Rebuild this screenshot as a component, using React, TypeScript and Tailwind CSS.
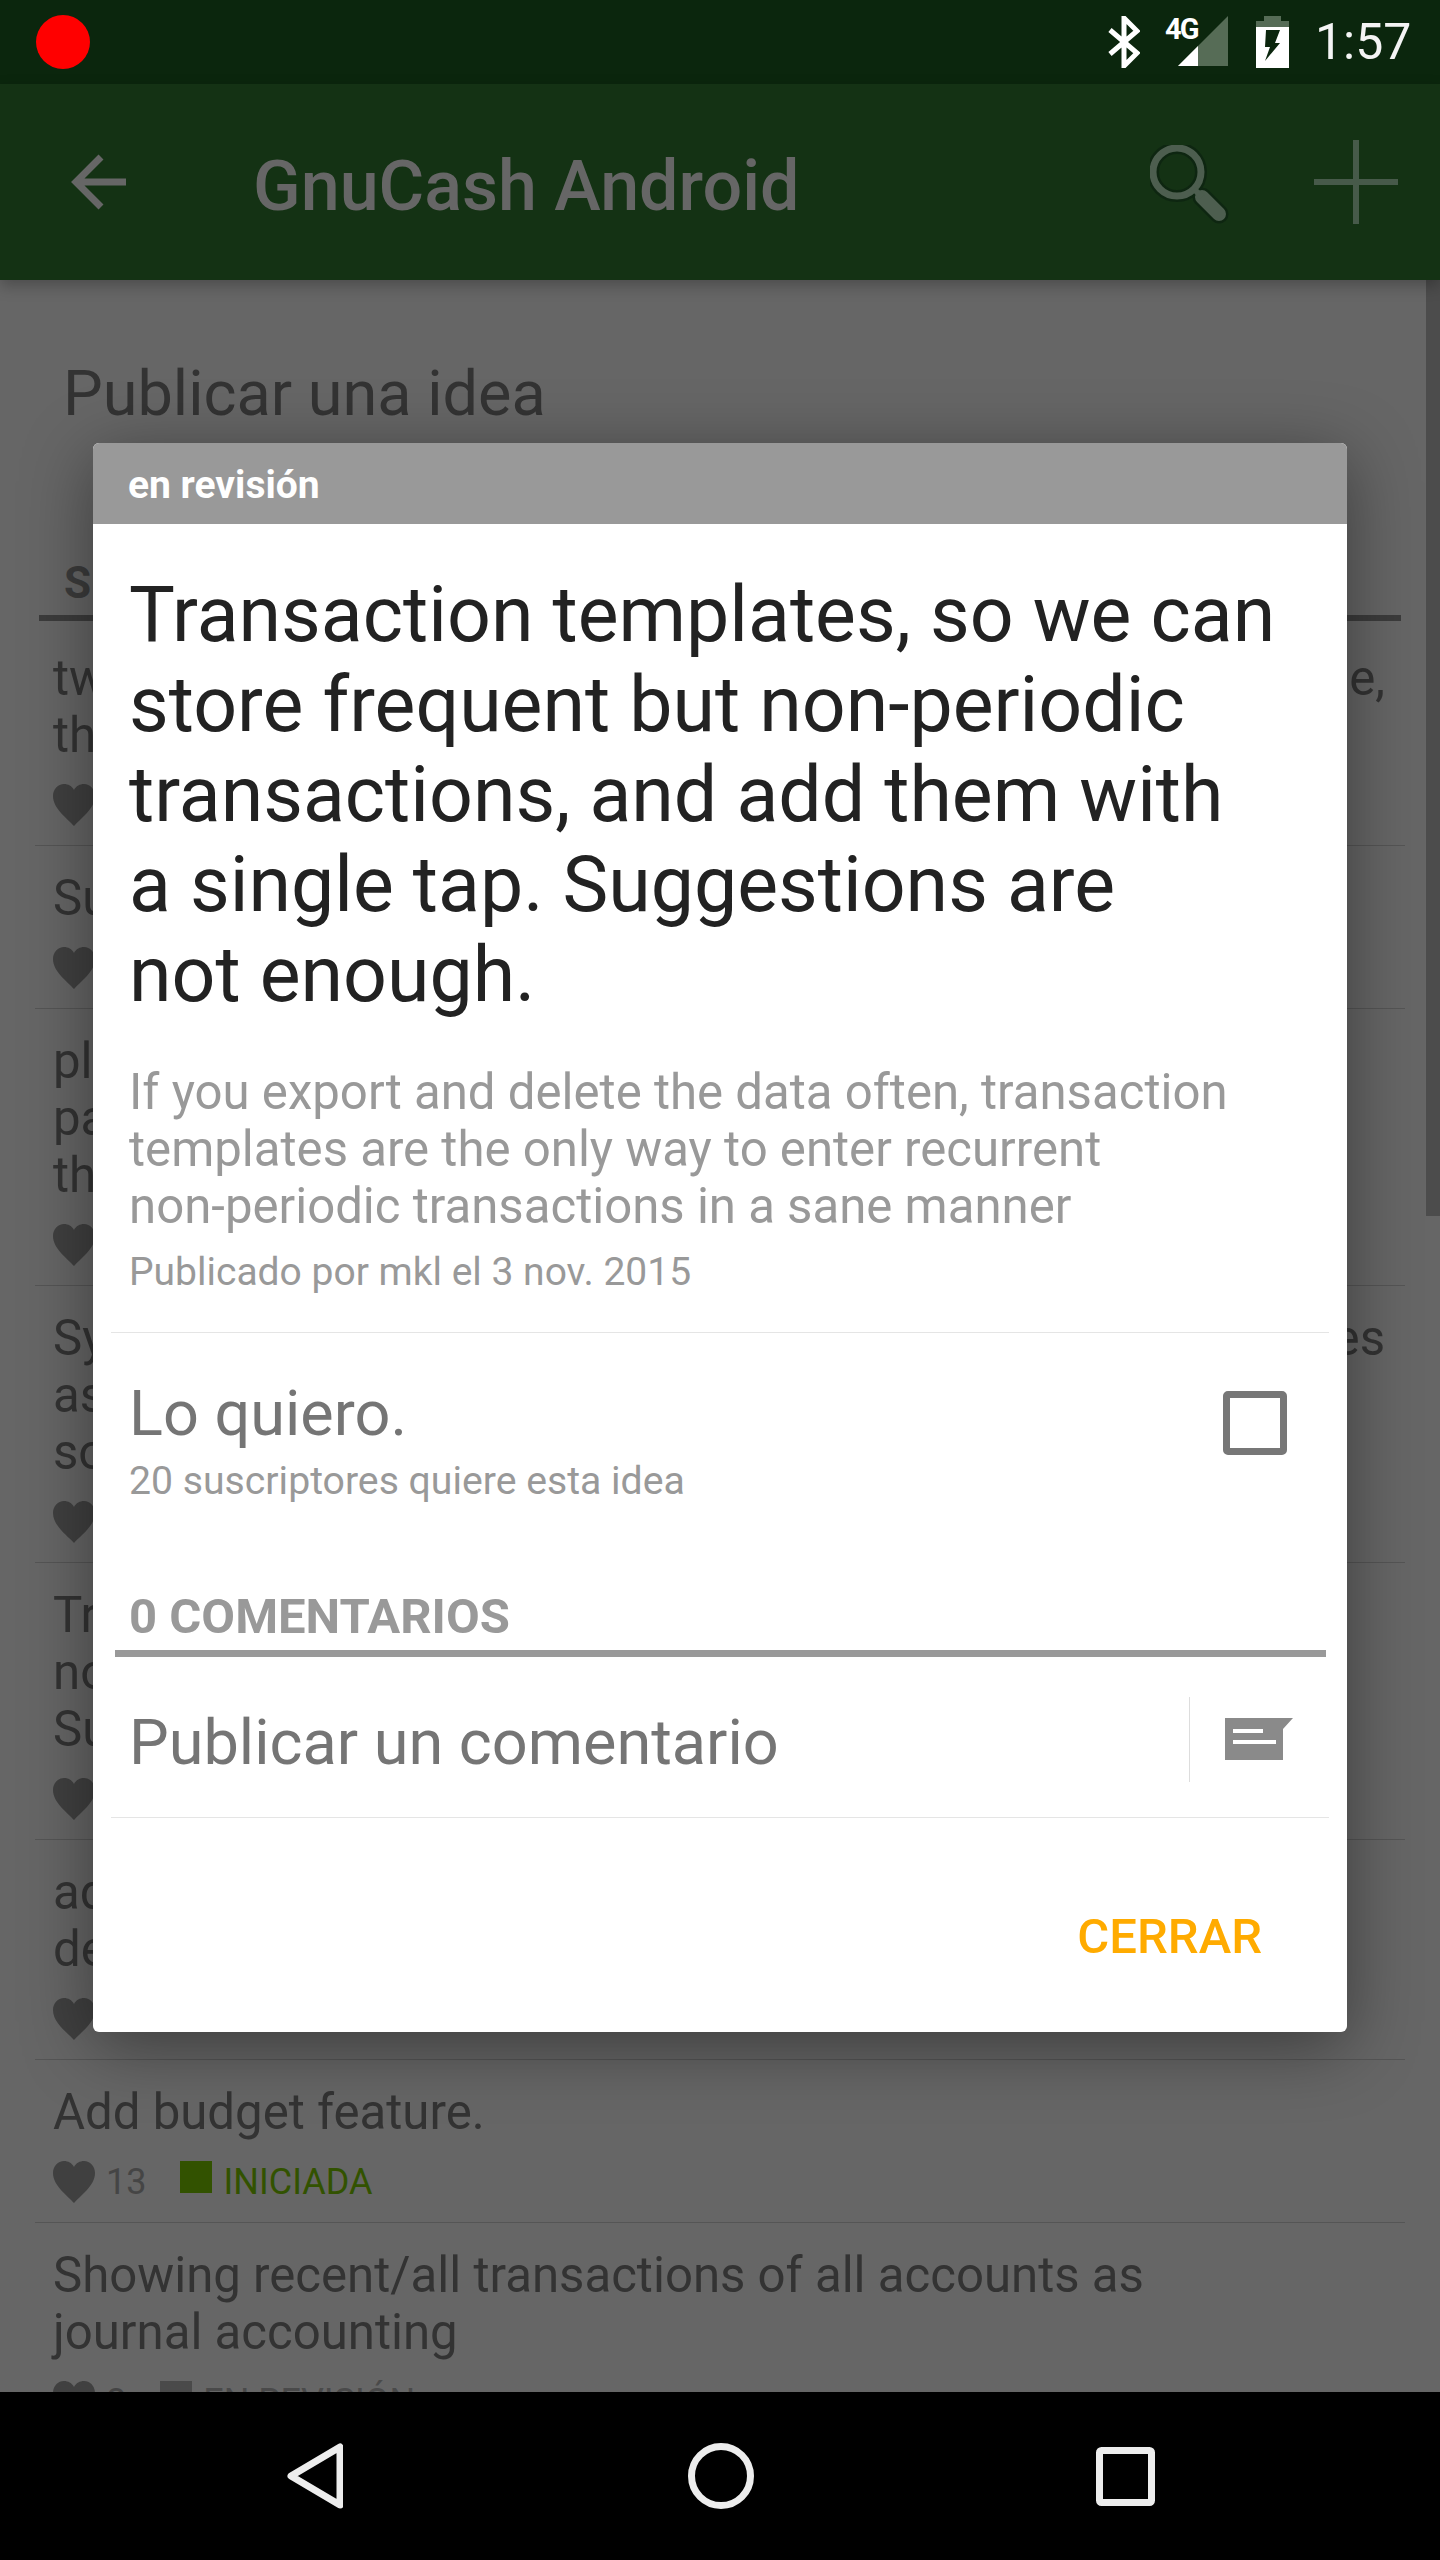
import React from "react";

function Heart() {
  return (
    <svg width="42" height="42" viewBox="0 0 42 42" className="block shrink-0">
      <path d="M21 42C15 35 0 25 0 12C0 5 5 0 11 0C15 0 19 2 21 6C23 2 27 0 31 0C37 0 42 5 42 12C42 25 27 35 21 42Z" fill="#404040" />
    </svg>
  );
}

function Row({ lines, count, status, color, end }: { lines: string[]; count: string; status: string; color: string; end?: string }) {
  return (
    <div className="mx-[35px] border-b border-[#555555] pt-[24px] pb-[19px]">
      {lines.map((l, i) => (
        <div key={i} className="flex justify-between whitespace-nowrap pl-[18px] pr-[20px] text-[49.15px] leading-[57px] text-[#333333]">
          <span>{l}</span>
          {i === 0 && end ? <span>{end}</span> : null}
        </div>
      ))}
      <div className="mt-[14px] flex h-[48px] items-start pl-[18px] pt-[6px]">
        <Heart />
        <span className="ml-[11px] text-[36px] leading-[42px] text-[#454545]">{count}</span>
        <span className="ml-[34px] h-[32px] w-[32px] shrink-0" style={{ backgroundColor: color }} />
        <span className="ml-[11px] text-[36px] leading-[42px]" style={{ color }}>{status}</span>
      </div>
    </div>
  );
}

export default function App() {
  return (
    <div className="relative flex h-[2560px] w-[1440px] flex-col overflow-hidden bg-[#666666] font-['Roboto',sans-serif]">
      {/* status bar */}
      <div className="flex h-[84px] shrink-0 items-center bg-[#0b260d] pl-[36px]">
        <div className="h-[54px] w-[54px] rounded-full bg-[#ff0000]" />
        <svg width="32" height="52" viewBox="0 0 32 52" className="ml-[1018px]">
          <path d="M2 14L29 37L16 50V2L29 15L2 38" fill="none" stroke="#ffffff" strokeWidth="5" />
        </svg>
        <div className="relative ml-[25px] h-[52px] w-[63px]">
          <span className="absolute left-0 top-[-3px] text-[29px] font-bold leading-[32px] tracking-[-2px] text-white">4G</span>
          <svg width="52" height="52" viewBox="0 0 52 52" className="absolute left-[11px] top-0">
            <path d="M2 50L52 0V50Z" fill="#566c56" />
            <path d="M2 50L22 30V50Z" fill="#ffffff" />
          </svg>
        </div>
        <svg width="34" height="52" viewBox="0 0 34 52" className="ml-[28px]">
          <path d="M8 0H25V5H33V11H0V5H8Z" fill="#566c56" />
          <path d="M0 11H33V52H0Z" fill="#ffffff" />
          <path d="M10 14H24L19 27H24L9 45L14 31H9Z" fill="#0b260d" />
        </svg>
        <span className="ml-[25px] text-[50px] leading-[56px] text-[#f4f4f4]">1:57</span>
      </div>

      {/* app bar */}
      <div className="z-10 flex h-[196px] shrink-0 items-center bg-[#143214] shadow-[0_6px_14px_rgba(0,0,0,0.25)]">
        <svg width="56" height="56" viewBox="0 0 56 56" className="ml-[71px]">
          <path d="M55 28H5M30 3L5 28L30 53" fill="none" stroke="#666666" strokeWidth="7" />
        </svg>
        <span className="ml-[126px] whitespace-nowrap pt-[7px] text-[70px] font-medium leading-[80px] text-[#666666]">GnuCash Android</span>
        <svg width="80" height="80" viewBox="0 0 80 80" className="ml-[351px] mt-[6px]">
          <circle cx="27" cy="27" r="24" fill="none" stroke="#0e2611" strokeWidth="12" />
          <path d="M52 52L69 69" stroke="#0e2611" strokeWidth="19" strokeLinecap="round" />
          <circle cx="27" cy="27" r="24" fill="none" stroke="#4d5e4f" strokeWidth="7" />
          <path d="M52 52L69 69" stroke="#4d5e4f" strokeWidth="14" strokeLinecap="round" />
          <path d="M44 44L52 52" stroke="#4d5e4f" strokeWidth="6" />
        </svg>
        <svg width="84" height="84" viewBox="0 0 84 84" className="ml-[84px]">
          <path d="M42 0V84M0 42H84" stroke="#475a4a" strokeWidth="6" />
        </svg>
      </div>

      {/* page underneath */}
      <div className="relative min-h-0 flex-1 overflow-hidden bg-[#666666]">
        <div className="pl-[63px] pt-[80px] text-[63px] leading-[68px] text-[#333333]">Publicar una idea</div>
        <div className="ml-[64px] mt-[129px] text-[44px] font-bold leading-[52px] text-[#3c3c3c]">SUGERENCIAS</div>
        <div className="mx-[39px] mt-[6px] h-[6px] bg-[#3c3c3c]" />
        <div className="mt-[5px]">
          <Row lines={["twice the accounts, it would be nice to be able", "this kind of split"]} end="include," count="42" status="EN REVISIÓN" color="#4a4a4a" />
          <Row lines={["Support for scheduled budgets"]} count="31" status="EN REVISIÓN" color="#4a4a4a" />
          <Row lines={["please add a setting to export all", "particular accounts of a book so", "that files remain small"]} count="27" status="EN REVISIÓN" color="#4a4a4a" />
          <Row lines={["Sync with the desktop version of", "as well as other accounting", "so data stays the same"]} end="files" count="22" status="EN REVISIÓN" color="#4a4a4a" />
          <Row lines={["Transaction templates, so we can store frequent but", "non-periodic transactions, and add them with a single tap.", "Suggestions are not enough."]} count="20" status="EN REVISIÓN" color="#4a4a4a" />
          <Row lines={["add a report of expenses per", "description or category"]} count="17" status="EN REVISIÓN" color="#4a4a4a" />
          <Row lines={["Add budget feature."]} count="13" status="INICIADA" color="#325200" />
          <Row lines={["Showing recent/all transactions of all accounts as", "journal accounting"]} count="8" status="EN REVISIÓN" color="#4a4a4a" />
        </div>
        <div className="absolute right-0 top-0 h-[936px] w-[14px] bg-[#4c4c4c]" />
      </div>

      {/* nav bar */}
      <div className="z-20 flex h-[168px] shrink-0 items-center bg-black pl-[287px]">
        <svg width="56" height="66" viewBox="0 0 56 66">
          <path d="M53 4V62L4 33Z" fill="none" stroke="#ededed" strokeWidth="7" strokeLinejoin="round" />
        </svg>
        <svg width="66" height="66" viewBox="0 0 66 66" className="ml-[345px]">
          <circle cx="33" cy="33" r="29.5" fill="none" stroke="#ededed" strokeWidth="7" />
        </svg>
        <svg width="59" height="59" viewBox="0 0 59 59" className="ml-[342px]">
          <rect x="3.5" y="3.5" width="52" height="52" rx="2" fill="none" stroke="#ededed" strokeWidth="7" />
        </svg>
      </div>

      {/* dialog */}
      <div className="absolute left-[93px] top-[443px] z-10 w-[1254px] overflow-hidden rounded-[6px] bg-white shadow-[0_14px_70px_rgba(0,0,0,0.42)]">
        <div className="flex h-[81px] items-center bg-[#999999] pl-[35px] pt-[3px] text-[39px] font-bold text-white">en revisión</div>
        <div className="pl-[36px] pt-[46px] text-[77px] leading-[90px] text-[#222222]">
          Transaction templates, so we can<br />
          store frequent but non-periodic<br />
          transactions, and add them with<br />
          a single tap. Suggestions are<br />
          not enough.
        </div>
        <div className="mt-[44px] pl-[36px] text-[49.15px] leading-[57px] text-[#999999]">
          If you export and delete the data often, transaction<br />
          templates are the only way to enter recurrent<br />
          non-periodic transactions in a sane manner
        </div>
        <div className="mt-[15px] pl-[36px] text-[39px] leading-[44px] text-[#999999]">Publicado por mkl el 3 nov. 2015</div>
        <div className="mx-[18px] mt-[38px] h-px bg-[#e5e5e5]" />
        <div className="flex items-start justify-between pl-[36px] pr-[60px] pt-[46px]">
          <div>
            <div className="text-[63px] leading-[70px] text-[#757575]">Lo quiero.</div>
            <div className="mt-[10px] text-[39.2px] leading-[44px] text-[#999999]">20 suscriptores quiere esta idea</div>
          </div>
          <div className="mt-[12px] h-[64px] w-[64px] rounded-[5px] border-[7px] border-[#777777]" />
        </div>
        <div className="mt-[86px] pl-[36px] text-[49px] font-bold leading-[56px] text-[#999999]">0 COMENTARIOS</div>
        <div className="ml-[22px] mr-[21px] mt-[5px] h-[7px] bg-[#999999]" />
        <div className="flex items-start pl-[36px] pt-[40px] pb-[35px]">
          <div className="mt-[11px] flex-1 text-[63px] leading-[70px] text-[#757575]">Publicar un comentario</div>
          <div className="h-[85px] w-px bg-[#dddddd]" />
          <svg width="68" height="42" viewBox="0 0 68 42" className="ml-[35px] mr-[54px] mt-[21px]">
            <path d="M0 0H68L58 11V42H0Z" fill="#8a8a8a" />
            <path d="M8 11H38V15H8ZM8 22H51V26H8Z" fill="#ffffff" />
          </svg>
        </div>
        <div className="mx-[18px] h-px bg-[#e5e5e5]" />
        <div className="mt-[91px] pb-[67px] pr-[85px] text-right text-[49px] font-medium leading-[56px] text-[#ffab00]">CERRAR</div>
      </div>
    </div>
  );
}
